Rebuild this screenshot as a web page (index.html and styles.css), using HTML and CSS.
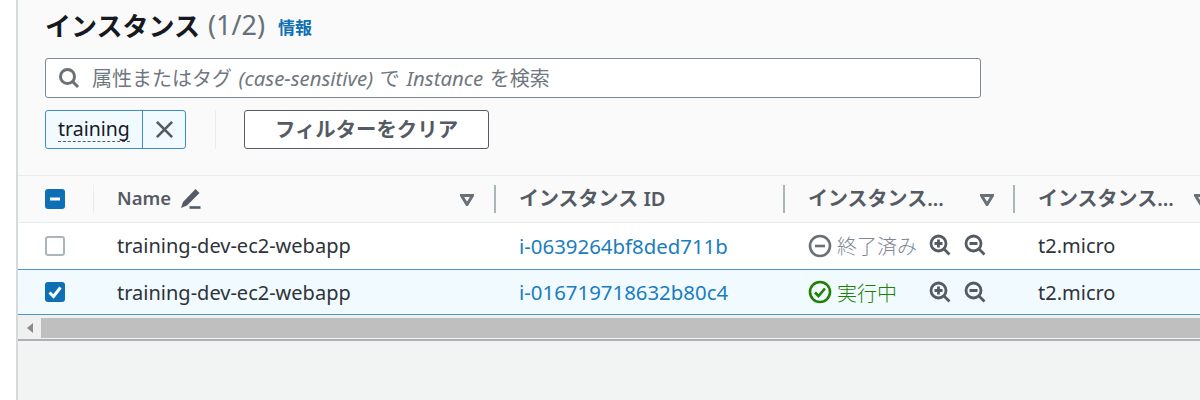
FILE: index.html
```html
<!DOCTYPE html>
<html lang="ja">
<head>
<meta charset="utf-8">
<title>インスタンス</title>
<link rel="stylesheet" href="styles.css">
</head>
<body>
<div class="panel">
  <header class="top">
    <div class="title-row">
      <h1>インスタンス</h1><span class="count">(1/2)</span><a class="info">情報</a>
    </div>
    <div class="search">
      <svg class="search-icon" viewBox="0 0 22 22"><circle cx="9.5" cy="9.5" r="7" /><path d="M14.5 14.5 20 20"/></svg>
      <span class="ph">属性またはタグ <i>(case-sensitive)</i> で <i>Instance</i> を検索</span>
    </div>
    <div class="filters">
      <div class="tag"><span class="tag-label"><span class="tag-text">training</span></span><span class="tag-x"><svg viewBox="0 0 20 20"><path d="M2 2 18 18M18 2 2 18"/></svg></span></div>
      <div class="vsep"></div>
      <button class="clear">フィルターをクリア</button>
    </div>
  </header>
  <div class="table">
    <div class="row head">
      <div class="c c0"><span class="cb on"><svg viewBox="0 0 20 20"><path class="dash" d="M5 10H15"/></svg></span></div>
      <div class="c c1"><span class="hname">Name</span>
        <svg class="pencil" viewBox="0 0 21 21"><path d="M15.5 1 19.5 5 7 17.5 1 20 3 14Z" class="fill"/><path d="M9.5 19.5H20.5" class="line"/></svg>
        <svg class="sort" viewBox="0 0 14 12"><path d="M1.5 1.5H12.5L7 10.5Z"/></svg></div>
      <div class="c c2 lined">インスタンス ID</div>
      <div class="c c3 lined"><span class="trunc">インスタンス...</span><svg class="sort" viewBox="0 0 14 12"><path d="M1.5 1.5H12.5L7 10.5Z"/></svg></div>
      <div class="c c4 lined"><span class="trunc">インスタンス...</span><svg class="sort" viewBox="0 0 14 12"><path d="M1.5 1.5H12.5L7 10.5Z"/></svg></div>
    </div>
    <div class="row body">
      <div class="c c0"><span class="cb"></span></div>
      <div class="c c1">training-dev-ec2-webapp</div>
      <div class="c c2"><a class="id">i-0639264bf8ded711b</a></div>
      <div class="c c3">
        <svg class="st gray" viewBox="0 0 24 24"><circle cx="12" cy="12" r="10"/><path d="M7 12H17"/></svg><span class="stt gray-t">終了済み</span>
        <svg class="zoom z1" viewBox="0 0 22 22"><circle cx="9.5" cy="9.5" r="7.5"/><path d="M15 15 20.5 20.5M5.5 9.5H13.5M9.5 5.5V13.5"/></svg>
        <svg class="zoom z2" viewBox="0 0 22 22"><circle cx="9.5" cy="9.5" r="7.5"/><path d="M15 15 20.5 20.5M5.5 9.5H13.5"/></svg>
      </div>
      <div class="c c4">t2.micro</div>
    </div>
    <div class="row body sel">
      <div class="c c0"><span class="cb on"><svg viewBox="0 0 20 20"><path class="dash" d="M4.5 10.5 8.5 14.5 15.5 5.5"/></svg></span></div>
      <div class="c c1">training-dev-ec2-webapp</div>
      <div class="c c2"><a class="id">i-016719718632b80c4</a></div>
      <div class="c c3">
        <svg class="st green" viewBox="0 0 24 24"><circle cx="12" cy="12" r="10"/><path d="M7 12.5 10.5 16 17 8.5"/></svg><span class="stt green-t">実行中</span>
        <svg class="zoom z1" viewBox="0 0 22 22"><circle cx="9.5" cy="9.5" r="7.5"/><path d="M15 15 20.5 20.5M5.5 9.5H13.5M9.5 5.5V13.5"/></svg>
        <svg class="zoom z2" viewBox="0 0 22 22"><circle cx="9.5" cy="9.5" r="7.5"/><path d="M15 15 20.5 20.5M5.5 9.5H13.5"/></svg>
      </div>
      <div class="c c4">t2.micro</div>
    </div>
    <div class="scrollbar"><span class="sb-btn"><svg viewBox="0 0 8 12"><path d="M7 1V11L1 6Z"/></svg></span><span class="sb-thumb"></span></div>
  </div>
</div>
</body>
</html>
```
FILE: styles.css
```css
* { box-sizing: border-box; }
html, body { margin: 0; height: 400px; overflow: hidden; background: #fff; }
body { padding-left: 16px; font-family: "Noto Sans", "Noto Sans CJK JP", sans-serif; font-size: 20px; color: #16191f; }
.panel { height: 400px; border-left: 2px solid #d5dbdb; background: #f2f3f3; overflow: hidden; }
.top { height: 176px; background: #fafafa; padding: 0 0 0 27px; border-bottom: 1px solid #eaeded; }
.title-row { height: 58px; display: flex; align-items: center; padding-bottom: 9px; }
h1 { margin: 0; font-family: "Noto Sans CJK JP", sans-serif; font-size: 26px; font-weight: 700; line-height: 32px; color: #16191f; }
.count { font-size: 27px; color: #687078; margin-left: 8px; }
.info { font-family: "Noto Sans CJK JP", sans-serif; font-size: 17px; font-weight: 700; color: #0f6fb5; margin-left: 13px; margin-top: 3px; }
.search { width: 936px; height: 40px; background: #fff; border: 1px solid #7d8998; border-radius: 3px; display: flex; align-items: center; padding-left: 12px; padding-bottom: 2px; }
.search-icon { width: 22px; height: 22px; fill: none; stroke: #687078; stroke-width: 3; flex: none; margin-top: 2px; }
.ph { margin-left: 12px; color: #6f7780; font-size: 20px; white-space: nowrap; word-spacing: 1.4px; }
.ph i { font-size: 20.4px; }
.filters { display: flex; align-items: stretch; height: 39px; margin-top: 12px; }
.tag { display: flex; width: 141px; border: 1px solid #3d8ccb; border-radius: 3px; background: #f1faff; }
.tag-label { width: 97px; border-right: 1px solid #3d8ccb; padding-left: 12px; display: flex; align-items: center; }
.tag-text { border-bottom: 1px dashed #545b64; line-height: 23px; height: 25px; font-size: 19.5px; }
.tag-x { flex: 1; display: flex; align-items: center; justify-content: center; }
.tag-x svg { width: 19px; height: 19px; fill: none; stroke: #545b64; stroke-width: 2.8; }
.vsep { width: 1px; background: #eaeded; margin: 0 28px 0 29px; }
.clear { width: 245px; background: #fff; border: 1px solid #545b64; border-radius: 3px; font-family: "Noto Sans CJK JP", sans-serif; font-size: 20.4px; font-weight: 700; color: #545b64; padding: 0 0 3px; }
.row { display: grid; grid-template-columns: 76px 402px 289px 230px 1fr; }
.c { display: flex; align-items: center; position: relative; white-space: nowrap; padding-left: 23px; min-width: 0; }
.head { height: 47px; background: #fafafa; border-bottom: 1px solid #eaeded; font-weight: 600; color: #545b64; font-size: 20px; padding-bottom: 3px; }
.head .c0 { padding-top: 3px; }
.head .c0::after, .head .lined::before { content: ""; position: absolute; top: 9px; height: 28px; }
.head .c0::after { right: 0; width: 1px; background: #eaeded; }
.head .lined::before { left: -2px; width: 2px; background: #aab7b8; }
.c0 { padding-left: 27px; }
.cb { width: 20px; height: 20px; border-radius: 3px; border: 2px solid #aab7b8; background: #fff; display: block; }
.cb.on { background: #0f6fb5; border: none; }
.cb svg { display: block; width: 20px; height: 20px; }
.dash { fill: none; stroke: #fff; stroke-width: 3; }
.hname { margin-right: 9px; font-size: 18.5px; }
.pencil { width: 21px; height: 21px; margin-top: 2px; }
.pencil .fill { fill: #545b64; }
.pencil .line { stroke: #545b64; stroke-width: 2.6; fill: none; }
.sort { width: 14px; height: 12px; fill: none; stroke: #687078; stroke-width: 3; position: absolute; top: 18px; }
.c1 .sort { right: 22px; }
.c3 .sort { right: 21px; }
.c4 .sort { left: 179px; }
.body { height: 47px; background: #fff; padding-bottom: 2px; }
.body .c1, .body .c4 { color: #2d3339; }
.sel { height: 46px; background: #f1faff; border-top: 1px solid #4c95cf; border-bottom: 1px solid #4c95cf; margin-top: -1px; position: relative; padding-bottom: 0; }
.id { color: #1a7dc0; font-size: 20.4px; }
.st { width: 24px; height: 24px; fill: none; stroke-width: 2.6; flex: none; }
.gray { stroke: #687078; }
.green { stroke: #1d8102; }
.stt { margin-left: 5px; font-family: "Noto Sans CJK JP", sans-serif; font-size: 20px; font-weight: 300; }
.gray-t { color: #7d8790; }
.green-t { color: #1d8102; }
.zoom { width: 22px; height: 22px; fill: none; stroke: #545b64; stroke-width: 2.8; position: absolute; top: 11px; }
.z1 { left: 144px; }
.z2 { left: 179px; }
.scrollbar { height: 24px; background: #f0f0f0; display: flex; padding: 3px 0 1px; }
.sb-btn { width: 23px; display: flex; align-items: center; justify-content: center; }
.sb-btn svg { width: 8px; height: 12px; fill: #8a8a8a; }
.sb-thumb { flex: 1; background: #bfbfbf; }
.table { border-bottom: 2px solid #aab2b5; }
```
